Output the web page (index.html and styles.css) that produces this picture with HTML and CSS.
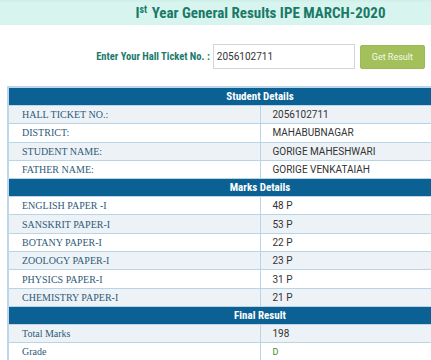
FILE: index.html
```html
<!DOCTYPE html>
<html>
<head>
<meta charset="utf-8">
<link rel="stylesheet" href="styles.css">
</head>
<body>
<div class="page">
  <header class="band">
    <h1 class="title">I<sup>st</sup> Year General Results IPE MARCH-2020</h1>
  </header>
  <form class="search">
    <label class="search-label" for="ht">Enter Your Hall Ticket No. :</label>
    <input class="search-input" id="ht" type="text" value="2056102711">
    <button class="search-btn" type="button">Get Result</button>
  </form>
  <table class="results">
    <tr class="head"><th colspan="2">Student Details</th></tr>
    <tr><td class="k">HALL TICKET NO.:</td><td class="v">2056102711</td></tr>
    <tr><td class="k">DISTRICT:</td><td class="v">MAHABUBNAGAR</td></tr>
    <tr><td class="k">STUDENT NAME:</td><td class="v">GORIGE MAHESHWARI</td></tr>
    <tr><td class="k">FATHER NAME:</td><td class="v">GORIGE VENKATAIAH</td></tr>
    <tr class="head"><th colspan="2">Marks Details</th></tr>
    <tr><td class="k">ENGLISH PAPER -I</td><td class="v">48 P</td></tr>
    <tr><td class="k">SANSKRIT PAPER-I</td><td class="v">53 P</td></tr>
    <tr><td class="k">BOTANY PAPER-I</td><td class="v">22 P</td></tr>
    <tr><td class="k">ZOOLOGY PAPER-I</td><td class="v">23 P</td></tr>
    <tr><td class="k">PHYSICS PAPER-I</td><td class="v">31 P</td></tr>
    <tr><td class="k">CHEMISTRY PAPER-I</td><td class="v">21 P</td></tr>
    <tr class="head"><th colspan="2">Final Result</th></tr>
    <tr><td class="k">Total Marks</td><td class="v">198</td></tr>
    <tr><td class="k">Grade</td><td class="v grade">D</td></tr>
  </table>
</div>
</body>
</html>
```

FILE: styles.css
```css
html, body {
  margin: 0;
  padding: 0;
  overflow: hidden;
  background: #ffffff;
}
.page {
  width: 521px;
  font-family: Roboto, "Liberation Sans", sans-serif;
}
.band {
  height: 25px;
  background: linear-gradient(#cfeee8 0, #d8f4ef 3px, #d8f4ef 100%);
  display: flex;
  justify-content: center;
  align-items: center;
}
.title {
  margin: 0;
  font-family: "Roboto Condensed", "Liberation Sans Narrow", "DejaVu Sans Condensed", Roboto, sans-serif;
  font-size: 15px;
  font-weight: 700;
  color: #1a7a67;
  line-height: 25px;
  padding-top: 2px;
}
.title sup {
  font-size: 10px;
  line-height: 0;
  vertical-align: 5px;
  margin-right: 1px;
}
.search {
  margin: 19px 0 0;
  display: flex;
  justify-content: center;
  align-items: center;
  height: 25px;
}
.search-label {
  font-family: "Roboto Condensed", "Liberation Sans Narrow", "DejaVu Sans Condensed", Roboto, sans-serif;
  font-size: 10.5px;
  font-weight: 700;
  color: #1b7a6d;
  margin-right: 3px;
}
.search-input {
  box-sizing: border-box;
  width: 142px;
  height: 25px;
  border: 1px solid #cfd6da;
  padding: 0 3px;
  font-family: Roboto, sans-serif;
  font-size: 10px;
  color: #333;
  margin: 0 5px 0 0;
}
.search-btn {
  box-sizing: border-box;
  width: 65px;
  height: 24px;
  margin-top: 1px;
  background: #a3c05b;
  border: 1px solid #9bb955;
  border-radius: 2px;
  color: #f4f8ea;
  font-family: Roboto, sans-serif;
  font-size: 9px;
  padding: 0;
}
.results {
  margin: 17px 0 0 7px;
  width: 506px;
  border-collapse: collapse;
  table-layout: fixed;
  border: 2px solid #bcd7ea;
}
.results th {
  background: #0b6194;
  color: #ffffff;
  font-family: "Roboto Condensed", "Liberation Sans Narrow", "DejaVu Sans Condensed", Roboto, sans-serif;
  font-size: 11px;
  font-weight: 700;
  height: 17px;
  padding: 0;
  border: 1px solid #bcd7ea;
  text-align: center;
}
.results td {
  height: 17.3px;
  padding: 0;
  border: 1px solid #b9d4e6;
}
.results tr:nth-child(even) td {
  background: #edf2f7;
}
.k {
  width: 50%;
  padding-left: 13px !important;
  font-family: "Liberation Serif", serif;
  font-size: 10px;
  color: #2d5a79;
}
.v {
  padding-left: 12px !important;
  font-size: 10px;
  color: #333333;
}
.grade {
  color: #3a8a2e;
  font-size: 9px;
}
```
